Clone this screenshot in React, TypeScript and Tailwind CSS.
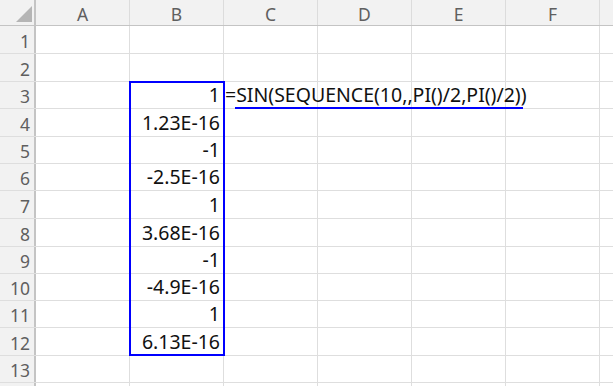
import React from "react";

const cols = ["A", "B", "C", "D", "E", "F"];
const rows: { h: string; b: string }[] = [
  { h: "h-[28px]", b: "" },
  { h: "h-[28px]", b: "" },
  { h: "h-[27px]", b: "1" },
  { h: "h-[28px]", b: "1.23E-16" },
  { h: "h-[27px]", b: "-1" },
  { h: "h-[27px]", b: "-2.5E-16" },
  { h: "h-[28px]", b: "1" },
  { h: "h-[28px]", b: "3.68E-16" },
  { h: "h-[27px]", b: "-1" },
  { h: "h-[27px]", b: "-4.9E-16" },
  { h: "h-[27px]", b: "1" },
  { h: "h-[28px]", b: "6.13E-16" },
  { h: "h-[27px]", b: "" },
  { h: "h-[27px]", b: "" },
];

export default function App() {
  return (
    <div className="relative w-[613px] h-[386px] overflow-hidden bg-white font-['Noto_Sans','Noto_Sans_CJK_JP',sans-serif] text-[19.5px] text-[#111]">
      {/* column header */}
      <div className="flex h-[26px] bg-[#f2f2f2] border-b border-[#c4c4c4]">
        <div className="relative w-[36px] shrink-0 border-r-2 border-[#c4c4c4]">
          <svg className="absolute left-[16px] top-[6px]" width="16" height="16" viewBox="0 0 16 16">
            <polygon points="16,0 16,16 0,16" fill="#b5b5b5" />
          </svg>
        </div>
        {cols.map((c) => (
          <div
            key={c}
            className="w-[94px] shrink-0 border-r border-[#dcdcdc] flex items-center justify-center pt-[2px] text-[#5f5f5f] text-[17.5px] leading-[20px]"
          >
            {c}
          </div>
        ))}
        <div className="flex-1" />
      </div>
      {rows.map((r, i) => (
        <div key={i} className={`flex ${r.h} border-b border-[#dedede]`}>
          <div className="w-[36px] shrink-0 bg-[#f2f2f2] border-r-2 border-[#c4c4c4] flex items-end justify-end pr-[4px] pb-[2px] text-[#5f5f5f] text-[17.5px] leading-[20px]">
            {i < 13 ? i + 1 : ""}
          </div>
          <div className="w-[94px] shrink-0 border-r border-[#dedede]" />
          <div className="w-[94px] shrink-0 border-r border-[#dedede] flex items-end justify-end pr-[3px] pb-[3px] leading-[20px]">
            {r.b}
          </div>
          <div className="relative w-[94px] shrink-0 border-r border-[#dedede]">
            {i === 2 && (
              <span className="absolute left-[1px] bottom-[3px] whitespace-nowrap leading-[20px]">
                =SIN(SEQUENCE(10,,PI()/2,PI()/2))
              </span>
            )}
          </div>
          <div className="w-[94px] shrink-0 border-r border-[#dedede]" />
          <div className="w-[94px] shrink-0 border-r border-[#dedede]" />
          <div className="w-[94px] shrink-0 border-r border-[#dedede]" />
          <div className="flex-1" />
        </div>
      ))}
      {/* range highlight */}
      <div className="absolute left-[129px] top-[81px] w-[96px] h-[275px] border-2 border-[#0000ff]" />
      {/* argument underline */}
      <div className="absolute left-[235px] top-[107px] w-[288px] h-[2px] bg-[#0000ff]" />
    </div>
  );
}
